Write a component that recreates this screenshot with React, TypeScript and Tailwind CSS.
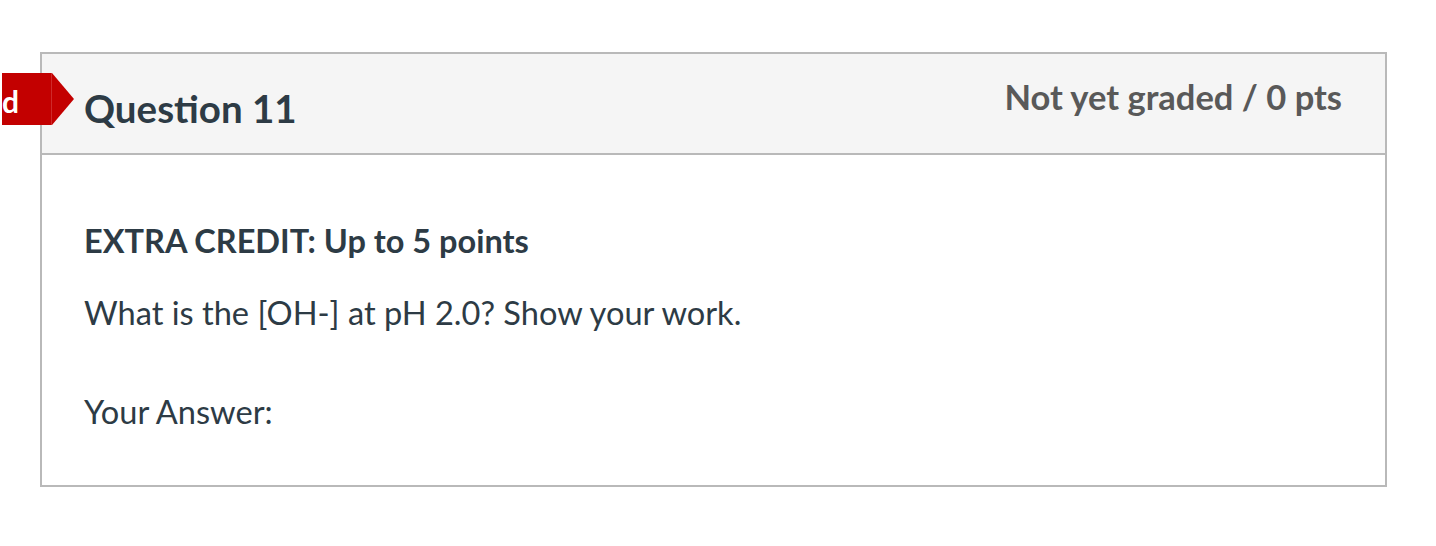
export default function App() {
  return (
    <div className="min-h-[546px] bg-white pt-[52px] pl-[40px] font-['Lato',sans-serif] text-[#2d3b45]">
      <div className="relative w-[1347px] h-[435px] border-2 border-[#b9b9b9]">
        {/* flag marker, clipped off the left edge */}
        <div className="absolute left-[-40px] top-[19px] flex h-[52px] items-stretch">
          <div className="w-[50px] border-r border-[#cf2a2a] bg-[#c30000] pt-[13px] text-[30px] font-bold leading-none text-white">
            <span className="block">d</span>
          </div>
          <svg width="22" height="52" viewBox="0 0 22 52" className="block">
            <polygon points="0,0 22,26 0,52" fill="#c30000" />
          </svg>
        </div>

        <div className="flex h-[101px] items-start justify-between border-b-2 border-[#b9b9b9] bg-[#f5f5f5] pl-[42px] pr-[43px]">
          <h2 className="mt-[35px] text-[38.5px] font-bold leading-none">Question 11</h2>
          <div className="mt-[26px] text-[34.5px] font-bold leading-none text-[#595959]">Not yet graded / 0 pts</div>
        </div>

        <div className="pl-[42px] pt-[70px]">
          <p className="text-[32.5px] font-bold leading-none">EXTRA CREDIT: Up to 5 points</p>
          <p className="mt-[39px] text-[32.6px] leading-none">What is the [OH-] at pH 2.0? Show your work.</p>
          <p className="mt-[67px] text-[32.6px] leading-none">Your Answer:</p>
        </div>
      </div>
    </div>
  );
}
